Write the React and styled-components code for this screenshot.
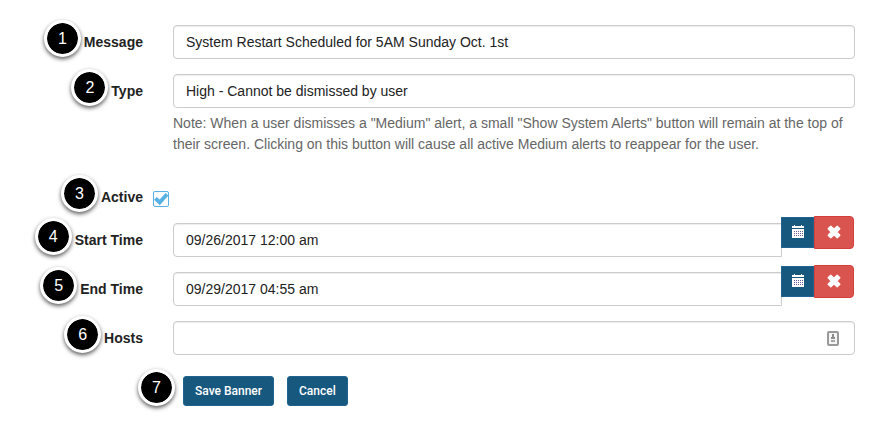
import styled, { createGlobalStyle } from 'styled-components';

function Check() {
  return (
    <svg viewBox="0 0 16 16" aria-hidden="true">
      <path d="M1 8.8 3.8 6 6.6 8.4 12.6 2 15.4 4.6 6.8 14.2Z" fill="#57b1e4" />
    </svg>
  );
}

function CalendarIcon() {
  const dots = [];
  for (let y = 6; y < 12; y += 2) {
    for (let x = 2; x < 11; x += 2) {
      dots.push(<rect key={`${x}-${y}`} x={x} y={y} width="1" height="1" fill="#6a5a9c" />);
    }
  }
  return (
    <svg width="12" height="13" viewBox="0 0 12 13" aria-hidden="true">
      <path d="M2 0h1v1h6V0h1v1h2v2H0V1h2Z" fill="#fff" />
      <path d="M0 4h12v9H0Z" fill="#fff" />
      {dots}
    </svg>
  );
}

function RemoveIcon() {
  return (
    <svg width="14" height="14" viewBox="0 0 14 14" aria-hidden="true">
      <path
        d="M3.8 1.2 7 4.2 10.2 1.2 12.8 3.8 9.8 7 12.8 10.2 10.2 12.8 7 9.8 3.8 12.8 1.2 10.2 4.2 7 1.2 3.8Z"
        fill="#fff"
        stroke="#fff"
        strokeWidth="1.4"
        strokeLinejoin="round"
      />
    </svg>
  );
}

function ContactIcon() {
  return (
    <svg width="12" height="15" viewBox="0 0 12 15" aria-hidden="true">
      <rect x="1" y="1" width="10" height="13" rx="1" fill="#f4f4f4" stroke="#999" strokeWidth="2" />
      <path d="M5 3h2v3h1v2H4V6h1Z" fill="#8c8c8c" />
      <path d="M4 9h4v2H4Z" fill="#a5a5a5" />
    </svg>
  );
}

function Field({ step, label, id, children }) {
  return (
    <Row>
      <LabelCell>
        <Step>{step}</Step>
        <Label htmlFor={id}>{label}</Label>
      </LabelCell>
      <Control>{children}</Control>
    </Row>
  );
}

function DateField({ step, label, id, value }) {
  return (
    <Field step={step} label={label} id={id}>
      <DateGroup>
        <Input id={id} type="text" defaultValue={value} $joined />
        <Addons>
          <PickButton type="button" aria-label={`Pick ${label}`}>
            <CalendarIcon />
          </PickButton>
          <ClearButton type="button" aria-label={`Clear ${label}`}>
            <RemoveIcon />
          </ClearButton>
        </Addons>
      </DateGroup>
    </Field>
  );
}

function App() {
  return (
    <>
      <GlobalStyle />
      <Form onSubmit={(e) => e.preventDefault()}>
        <Field step="1" label="Message" id="message">
          <Input id="message" type="text" defaultValue="System Restart Scheduled for 5AM Sunday Oct. 1st" />
        </Field>
        <Field step="2" label="Type" id="type">
          <Select id="type" defaultValue="high">
            <option value="high">High - Cannot be dismissed by user</option>
          </Select>
          <Help>
            Note: When a user dismisses a "Medium" alert, a small "Show System Alerts" button will remain at the top of
            their screen. Clicking on this button will cause all active Medium alerts to reappear for the user.
          </Help>
        </Field>
        <CheckRow>
          <LabelCell>
            <Step>3</Step>
            <Label htmlFor="active">Active</Label>
          </LabelCell>
          <CheckWrap>
            <Checkbox id="active" type="checkbox" defaultChecked />
            <Check />
          </CheckWrap>
        </CheckRow>
        <DateField step="4" label="Start Time" id="start" value="09/26/2017 12:00 am" />
        <DateField step="5" label="End Time" id="end" value="09/29/2017 04:55 am" />
        <Field step="6" label="Hosts" id="hosts">
          <HostsWrap>
            <Input id="hosts" type="text" />
            <ContactIcon />
          </HostsWrap>
        </Field>
        <Actions>
          <Step>7</Step>
          <Buttons>
            <Button type="submit">Save Banner</Button>
            <Button type="button">Cancel</Button>
          </Buttons>
        </Actions>
      </Form>
    </>
  );
}

const GlobalStyle = createGlobalStyle`
  * {
    box-sizing: border-box;
  }

  body {
    margin: 0;
    background: #fff;
    color: #222;
    font-family: "Liberation Sans", Arial, sans-serif;
    font-size: 14px;
    line-height: 21px;
  }
`;

const Form = styled.form`
  display: flex;
  flex-direction: column;
  gap: 15px;
  padding: 25px 17px 15px 0;
`;

const Row = styled.div`
  display: grid;
  grid-template-columns: 143px minmax(0, 1fr);
  column-gap: 30px;
  align-items: start;
`;

const CheckRow = styled(Row)`
  column-gap: 10px;
  margin: 10px 0 -6px;
`;

const LabelCell = styled.div`
  height: 34px;
  display: flex;
  align-items: center;
  justify-content: flex-end;
  gap: 3px;
`;

const Step = styled.span`
  width: 37px;
  height: 37px;
  flex: none;
  display: flex;
  align-items: center;
  justify-content: center;
  margin-bottom: 7px;
  padding-bottom: 1px;
  border: 3px solid #fff;
  border-radius: 50%;
  background: #000;
  background-clip: padding-box;
  box-shadow: 0 2px 4px rgba(0, 0, 0, 0.65);
  color: #fff;
  font-size: 16px;
`;

const Label = styled.label`
  font-weight: 700;
  white-space: nowrap;
`;

const Control = styled.div`
  min-width: 0;
`;

const Input = styled.input`
  display: block;
  width: 100%;
  height: 34px;
  padding: 6px 12px;
  border: 1px solid #ccc;
  border-radius: ${({ $joined }) => ($joined ? '4px 0 0 4px' : '4px')};
  background: #fff;
  box-shadow: inset 0 1px 1px rgba(0, 0, 0, 0.075);
  color: #222;
  font: inherit;
  outline: none;
`;

const Select = styled(Input).attrs({ as: 'select' })`
  appearance: none;
`;

const Help = styled.p`
  margin: 5px 0 0;
  color: #666;
`;

const CheckWrap = styled.span`
  position: relative;
  width: 16px;
  height: 16px;
  margin-top: 11px;

  svg {
    position: absolute;
    inset: 0;
    pointer-events: none;
  }

  input:not(:checked) + svg {
    display: none;
  }
`;

const Checkbox = styled.input`
  appearance: none;
  display: block;
  width: 16px;
  height: 16px;
  margin: 0;
  border: 1px solid #57b1e4;
  border-radius: 2px;
  background: #fff;
`;

const DateGroup = styled.div`
  display: flex;
  align-items: flex-start;
`;

const Addons = styled.div`
  display: flex;
  align-items: center;
  flex: none;
  margin: -7px 1px 0 -1px;
`;

const PickButton = styled.button`
  width: 33px;
  height: 31px;
  display: flex;
  align-items: center;
  justify-content: center;
  padding: 0 0 2px;
  border: 1px solid #1f6391;
  background: #17587e;
  cursor: pointer;
`;

const ClearButton = styled(PickButton)`
  width: 40px;
  height: 33px;
  border-color: #d43f3a;
  border-radius: 0 4px 4px 0;
  background: #d9534f;
`;

const HostsWrap = styled.div`
  position: relative;

  svg {
    position: absolute;
    top: 10px;
    right: 16px;
  }
`;

const Actions = styled.div`
  display: flex;
  align-items: center;
  gap: 8px;
  height: 42px;
  padding-left: 138px;
`;

const Buttons = styled.div`
  display: flex;
  gap: 13px;
`;

const Button = styled.button`
  height: 30px;
  padding: 0 11px;
  border: 1px solid #1f6391;
  border-radius: 3px;
  background: #17587e;
  color: #fff;
  font-family: Roboto, Arial, sans-serif;
  font-size: 12px;
  font-weight: 500;
  cursor: pointer;
`;

export default App;
